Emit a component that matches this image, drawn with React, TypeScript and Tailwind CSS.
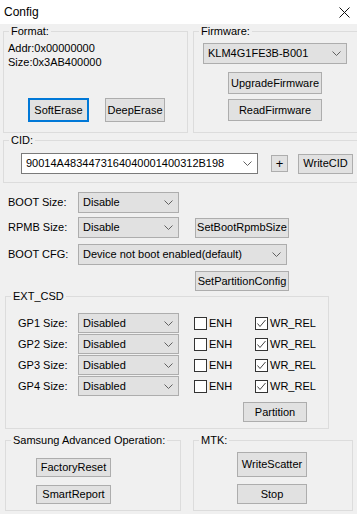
import React from "react";

// Windows-style "Config" dialog (MFC look)

function Btn({ className = "", children }: { className?: string; children: React.ReactNode }) {
  return (
    <button
      className={`flex items-center justify-center bg-[#e1e1e1] border border-[#adadad] text-[11px] leading-none text-black shrink-0 ${className}`}
    >
      {children}
    </button>
  );
}

function Chevron() {
  return (
    <svg width="9" height="5" viewBox="0 0 9 5" className="shrink-0">
      <polyline points="0.5,0.5 4.5,4.5 8.5,0.5" fill="none" stroke="#606060" strokeWidth="1" />
    </svg>
  );
}

function Combo({ className = "", text, white }: { className?: string; text: string; white?: boolean }) {
  return (
    <div
      className={`flex items-center justify-between pl-[4px] pr-[5px] shrink-0 border ${
        white ? "bg-white border-[#7a7a7a]" : "bg-[#e1e1e1] border-[#adadad]"
      } ${className}`}
    >
      <span className="leading-none whitespace-nowrap">{text}</span>
      <Chevron />
    </div>
  );
}

function Check({ checked, label }: { checked?: boolean; label: string }) {
  return (
    <div className="flex items-center gap-[2px]">
      <div className="w-[13px] h-[13px] bg-white border border-[#333333] flex items-center justify-center">
        {checked && (
          <svg width="11" height="11" viewBox="0 0 11 11">
            <polyline points="1.5,5.5 4,8.5 9.5,2" fill="none" stroke="#444444" strokeWidth="1" />
          </svg>
        )}
      </div>
      <span className="leading-none">{label}</span>
    </div>
  );
}

function Group({
  className = "",
  title,
  children,
}: {
  className?: string;
  title: string;
  children: React.ReactNode;
}) {
  return (
    <fieldset className={`border border-[#dcdcdc] p-0 m-0 shrink-0 ${className}`}>
      <legend className="ml-[5px] px-[2px] leading-[14px] text-[11px]">{title}</legend>
      {children}
    </fieldset>
  );
}

export default function App() {
  const gps = ["GP1 Size:", "GP2 Size:", "GP3 Size:", "GP4 Size:"];

  return (
    <div className="w-[357px] h-[514px] overflow-hidden bg-[#f0f0f0] text-black text-[11px] font-['Liberation_Sans',Arial,sans-serif]">
      {/* Title bar */}
      <div className="h-[24px] bg-white flex items-center justify-between pl-[4px] pr-[7px]">
        <span className="text-[12px] leading-none">Config</span>
        <svg width="11" height="11" viewBox="0 0 11 11">
          <line x1="0.5" y1="0.5" x2="10.5" y2="10.5" stroke="#111" strokeWidth="1" />
          <line x1="10.5" y1="0.5" x2="0.5" y2="10.5" stroke="#111" strokeWidth="1" />
        </svg>
      </div>

      <div className="w-[366px]">
        {/* Format / Firmware */}
        <div className="flex">
          <Group title="Format:" className="ml-[3px] w-[185px] h-[109px]">
            <div className="pt-[3px] pl-[4px] leading-[14px]">
              <div>Addr:0x00000000</div>
              <div>Size:0x3AB400000</div>
            </div>
            <div className="flex mt-[29px] ml-[24px]">
              <Btn className="w-[61px] h-[24px] !border-2 !border-[#0078d7]">SoftErase</Btn>
              <Btn className="ml-[16px] w-[60px] h-[24px]">DeepErase</Btn>
            </div>
          </Group>

          <Group title="Firmware:" className="ml-[5px] w-[172px] h-[109px]">
            <div className="ml-[9px] w-[144px] flex flex-col items-center">
              <Combo className="mt-[5px] w-[144px] h-[21px]" text="KLM4G1FE3B-B001" />
              <Btn className="mt-[8px] w-[94px] h-[22px]">UpgradeFirmware</Btn>
              <Btn className="mt-[5px] w-[94px] h-[22px]">ReadFirmware</Btn>
            </div>
          </Group>
        </div>

        {/* CID */}
        <Group title="CID:" className="ml-[3px] w-[362px] h-[50px]">
          <div className="flex items-center mt-[6px] ml-[17px]">
            <Combo white className="w-[237px] h-[21px]" text="90014A4834473164040001400312B198" />
            <Btn className="ml-[13px] w-[17px] h-[17px] text-[13px]">+</Btn>
            <Btn className="ml-[10px] w-[55px] h-[20px]">WriteCID</Btn>
          </div>
        </Group>

        {/* Boot settings */}
        <div className="pl-[8px] mt-[9px] flex items-center h-[21px]">
          <span className="w-[70px] leading-none">BOOT Size:</span>
          <Combo className="w-[101px] h-[21px]" text="Disable" />
        </div>
        <div className="pl-[8px] mt-[4px] flex items-center h-[21px]">
          <span className="w-[70px] leading-none">RPMB Size:</span>
          <Combo className="w-[101px] h-[21px]" text="Disable" />
          <Btn className="ml-[16px] w-[94px] h-[20px]">SetBootRpmbSize</Btn>
        </div>
        <div className="pl-[8px] mt-[6px] flex items-center h-[21px]">
          <span className="w-[70px] leading-none">BOOT CFG:</span>
          <Combo className="w-[209px] h-[21px]" text="Device not boot enabled(default)" />
        </div>
        <Btn className="mt-[6px] ml-[195px] w-[94px] h-[20px]">SetPartitionConfig</Btn>

        {/* EXT_CSD */}
        <Group title="EXT_CSD" className="-mt-[2px] ml-[5px] w-[324px] h-[140px]">
          <div className="mt-[10px] flex flex-col gap-[1px]">
            {gps.map((g, i) => (
              <div key={i} className="flex items-center h-[20px] pl-[12px]">
                <span className="w-[60px] leading-none">{g}</span>
                <Combo className="w-[101px] h-[20px]" text="Disabled" />
                <div className="ml-[15px] w-[61px]">
                  <Check label="ENH" />
                </div>
                <Check checked label="WR_REL" />
              </div>
            ))}
          </div>
          <Btn className="mt-[6px] ml-[237px] w-[64px] h-[20px]">Partition</Btn>
        </Group>

        {/* Samsung / MTK */}
        <div className="flex mt-[4px]">
          <Group title="Samsung Advanced Operation:" className="ml-[5px] w-[176px] h-[78px]">
            <Btn className="mt-[11px] ml-[30px] w-[75px] h-[19px]">FactoryReset</Btn>
            <Btn className="mt-[8px] ml-[30px] w-[75px] h-[19px]">SmartReport</Btn>
          </Group>
          <Group title="MTK:" className="ml-[12px] w-[160px] h-[78px]">
            <Btn className="mt-[5px] ml-[43px] w-[70px] h-[25px]">WriteScatter</Btn>
            <Btn className="mt-[7px] ml-[43px] w-[70px] h-[20px]">Stop</Btn>
          </Group>
        </div>
      </div>
    </div>
  );
}
